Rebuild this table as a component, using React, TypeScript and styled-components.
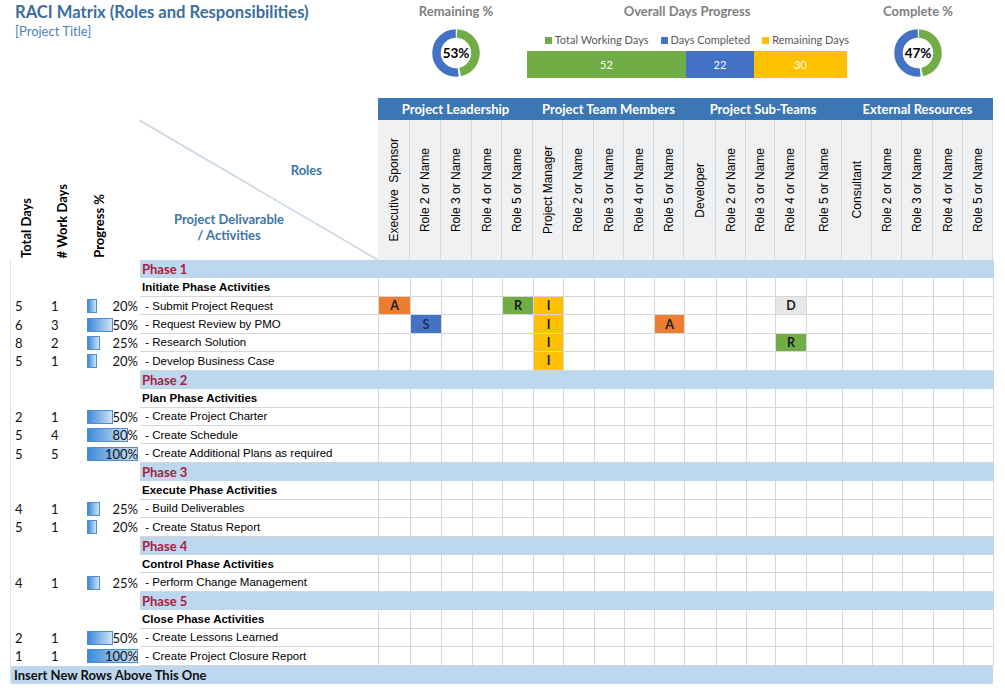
import styled, { createGlobalStyle } from 'styled-components';

const GlobalStyle = createGlobalStyle`
  body {
    margin: 0;
    background: #ffffff;
    font-family: Lato, "Open Sans", sans-serif;
  }
`;

const ROLE_WIDTHS = [32, 31, 31, 30, 31, 30, 31, 30, 30, 30, 32, 30, 29, 31, 36, 30, 30, 31, 30, 30];
const ROLE_COLS = ROLE_WIDTHS.map((w) => `${w}px`).join(' ');
const LEFT_COLS = '36px 36px 57px 239px';

const GROUPS = [
  { name: 'Project Leadership', span: 5 },
  { name: 'Project Team Members', span: 5 },
  { name: 'Project Sub-Teams', span: 5 },
  { name: 'External Resources', span: 5 },
];

const ROLES = [
  'Executive  Sponsor', 'Role 2 or Name', 'Role 3 or Name', 'Role 4 or Name', 'Role 5 or Name',
  'Project Manager', 'Role 2 or Name', 'Role 3 or Name', 'Role 4 or Name', 'Role 5 or Name',
  'Developer', 'Role 2 or Name', 'Role 3 or Name', 'Role 4 or Name', 'Role 5 or Name',
  'Consultant', 'Role 2 or Name', 'Role 3 or Name', 'Role 4 or Name', 'Role 5 or Name',
];

type Mark = 'A' | 'R' | 'I' | 'S' | 'D';

type Row =
  | { kind: 'phase'; label: string }
  | { kind: 'section'; label: string }
  | { kind: 'task'; total: number; work: number; pct: number; label: string; marks?: Record<number, Mark> };

const ROWS: Row[] = [
  { kind: 'phase', label: 'Phase 1' },
  { kind: 'section', label: 'Initiate Phase Activities' },
  { kind: 'task', total: 5, work: 1, pct: 20, label: 'Submit Project Request', marks: { 0: 'A', 4: 'R', 5: 'I', 13: 'D' } },
  { kind: 'task', total: 6, work: 3, pct: 50, label: 'Request Review by PMO', marks: { 1: 'S', 5: 'I', 9: 'A' } },
  { kind: 'task', total: 8, work: 2, pct: 25, label: 'Research Solution', marks: { 5: 'I', 13: 'R' } },
  { kind: 'task', total: 5, work: 1, pct: 20, label: 'Develop Business Case', marks: { 5: 'I' } },
  { kind: 'phase', label: 'Phase 2' },
  { kind: 'section', label: 'Plan Phase Activities' },
  { kind: 'task', total: 2, work: 1, pct: 50, label: 'Create Project Charter' },
  { kind: 'task', total: 5, work: 4, pct: 80, label: 'Create Schedule' },
  { kind: 'task', total: 5, work: 5, pct: 100, label: 'Create Additional Plans as required' },
  { kind: 'phase', label: 'Phase 3' },
  { kind: 'section', label: 'Execute Phase Activities' },
  { kind: 'task', total: 4, work: 1, pct: 25, label: 'Build Deliverables' },
  { kind: 'task', total: 5, work: 1, pct: 20, label: 'Create Status Report' },
  { kind: 'phase', label: 'Phase 4' },
  { kind: 'section', label: 'Control Phase Activities' },
  { kind: 'task', total: 4, work: 1, pct: 25, label: 'Perform Change Management' },
  { kind: 'phase', label: 'Phase 5' },
  { kind: 'section', label: 'Close Phase Activities' },
  { kind: 'task', total: 2, work: 1, pct: 50, label: 'Create Lessons Learned' },
  { kind: 'task', total: 1, work: 1, pct: 100, label: 'Create Project Closure Report' },
];

const MARK_COLORS: Record<Mark, { bg: string; fg: string }> = {
  A: { bg: '#ed7d31', fg: '#1a1a1a' },
  R: { bg: '#70ad47', fg: '#1a1a1a' },
  I: { bg: '#ffc000', fg: '#1a1a1a' },
  S: { bg: '#4472c4', fg: '#1f2f52' },
  D: { bg: '#e7e6e6', fg: '#1a1a1a' },
};

function Donut({ value }: { value: number }) {
  const r = 19.5;
  const c = 2 * Math.PI * r;
  const gap = 2;
  const green = c * (1 - value / 100);
  const blue = c * (value / 100);
  return (
    <svg width="50" height="50" viewBox="0 0 50 50">
      <g transform="rotate(-90 25 25)" fill="none" strokeWidth="8.5">
        <circle cx="25" cy="25" r={r} stroke="#70ad47" strokeDasharray={`${green - gap} ${c}`} strokeDashoffset={-gap / 2} />
        <circle cx="25" cy="25" r={r} stroke="#4472c4" strokeDasharray={`${blue - gap} ${c}`} strokeDashoffset={-(green + gap / 2)} />
      </g>
    </svg>
  );
}

export default function App() {
  return (
    <Page>
      <GlobalStyle />
      <Header>
        <TitleBlock>
          <Title>RACI Matrix (Roles and Responsibilities)</Title>
          <Subtitle>[Project Title]</Subtitle>
        </TitleBlock>
        <Kpi>
          <KpiTitle>Remaining %</KpiTitle>
          <DonutWrap>
            <Donut value={53} />
            <DonutLabel>53%</DonutLabel>
          </DonutWrap>
        </Kpi>
        <Progress>
          <KpiTitle>Overall Days Progress</KpiTitle>
          <Legend>
            <LegendItem $color="#70ad47">Total Working Days</LegendItem>
            <LegendItem $color="#4472c4">Days Completed</LegendItem>
            <LegendItem $color="#ffc000">Remaining Days</LegendItem>
          </Legend>
          <Bar>
            <Segment $color="#70ad47" $w={159}>52</Segment>
            <Segment $color="#4472c4" $w={68}>22</Segment>
            <Segment $color="#ffc000" $w={93}>30</Segment>
          </Bar>
        </Progress>
        <Kpi>
          <KpiTitle>Complete %</KpiTitle>
          <DonutWrap>
            <Donut value={53} />
            <DonutLabel>47%</DonutLabel>
          </DonutWrap>
        </Kpi>
      </Header>

      <Table>
        <TableHead>
          <LeftHead>
            <SideLabel $pad={8}><span>Total Days</span></SideLabel>
            <SideLabel $pad={8}><span># Work Days</span></SideLabel>
            <SideLabel $pad={9}><span>Progress %</span></SideLabel>
            <Deliverable>
              <Diagonal width="239" height="162" viewBox="0 0 239 162">
                <line x1="0" y1="22" x2="239" y2="162" stroke="#c9d6e4" strokeWidth="1.6" />
              </Diagonal>
              <RolesText>Roles</RolesText>
              <DeliverableText>Project Delivarable<br />/ Activities</DeliverableText>
            </Deliverable>
          </LeftHead>
          <RoleHead>
            <GroupBar>
              {GROUPS.map((g) => (
                <Group key={g.name} $span={g.span}>{g.name}</Group>
              ))}
            </GroupBar>
            <RoleLabels>
              {ROLES.map((r, i) => (
                <RoleLabel key={i}><span>{r}</span></RoleLabel>
              ))}
            </RoleLabels>
          </RoleHead>
        </TableHead>

        <Body>
          {ROWS.map((row, i) => {
            if (row.kind === 'phase') {
              return (
                <GridRow key={i}>
                  <Gutter />
                  <PhaseBand>{row.label}</PhaseBand>
                </GridRow>
              );
            }
            if (row.kind === 'section') {
              return (
                <GridRow key={i}>
                  <Gutter />
                  <Activity $bold>{row.label}</Activity>
                  {ROLE_WIDTHS.map((_, c) => <RoleCell key={c} />)}
                </GridRow>
              );
            }
            return (
              <GridRow key={i}>
                <Num>{row.total}</Num>
                <Num>{row.work}</Num>
                <ProgressCell>
                  <ProgressBar style={{ width: `${(row.pct / 100) * 51}px` }} />
                  <Pct>{row.pct}%</Pct>
                </ProgressCell>
                <Activity> - {row.label}</Activity>
                {ROLE_WIDTHS.map((_, c) => {
                  const m = row.marks?.[c];
                  return (
                    <RoleCell key={c} $mark={m}>
                      {m}
                    </RoleCell>
                  );
                })}
              </GridRow>
            );
          })}
          <Footer>Insert New Rows Above This One</Footer>
        </Body>
      </Table>
    </Page>
  );
}

const Page = styled.div`
  width: 1005px;
  height: 693px;
  overflow: hidden;
`;

const Header = styled.div`
  display: flex;
  gap: 30px;
  padding-left: 15px;
  height: 98px;
`;

const TitleBlock = styled.div`
  width: 370px;
  padding-top: 2px;
`;

const Title = styled.h1`
  margin: 0;
  font-size: 16.6px;
  line-height: 20px;
  font-weight: 700;
  color: #3b6e9f;
`;

const Subtitle = styled.div`
  margin-top: 1px;
  font-size: 13px;
  line-height: 16px;
  color: #4f81bd;
`;

const Kpi = styled.div`
  width: 82px;
  display: flex;
  flex-direction: column;
  align-items: center;
`;

const KpiTitle = styled.div`
  margin-top: 3px;
  font-size: 13px;
  line-height: 16px;
  font-weight: 700;
  color: #7f7f7f;
  white-space: nowrap;
`;

const DonutWrap = styled.div`
  margin-top: 9px;
  display: grid;
  place-items: center;
  & > * {
    grid-area: 1 / 1;
  }
`;

const DonutLabel = styled.div`
  font-size: 13.5px;
  font-weight: 700;
  color: #000;
`;

const Progress = styled.div`
  width: 320px;
  display: flex;
  flex-direction: column;
  align-items: center;
`;

const Legend = styled.div`
  display: flex;
  gap: 12px;
  margin-top: 14px;
  align-self: flex-end;
  margin-right: -2px;
  font-size: 11px;
  line-height: 14px;
  color: #595959;
`;

const LegendItem = styled.span<{ $color: string }>`
  display: flex;
  align-items: center;
  gap: 3px;
  &::before {
    content: '';
    width: 7px;
    height: 7px;
    background: ${(p) => p.$color};
  }
`;

const Bar = styled.div`
  display: flex;
  margin-top: 4px;
  height: 27px;
  width: 320px;
`;

const Segment = styled.div<{ $color: string; $w: number }>`
  width: ${(p) => p.$w}px;
  background: ${(p) => p.$color};
  color: #ffffff;
  font-size: 11px;
  display: flex;
  align-items: center;
  justify-content: center;
`;

const Table = styled.div`
  margin-left: 10px;
  width: 983px;
`;

const TableHead = styled.div`
  display: flex;
  height: 162px;
`;

const LeftHead = styled.div`
  display: grid;
  grid-template-columns: ${LEFT_COLS};
`;

const SideLabel = styled.div<{ $pad: number }>`
  display: flex;
  align-items: flex-end;
  padding-left: ${(p) => p.$pad}px;
  padding-bottom: 2px;
  span {
    writing-mode: vertical-rl;
    transform: rotate(180deg);
    font-size: 13px;
    font-weight: 700;
    color: #000;
    white-space: nowrap;
  }
`;

const Deliverable = styled.div`
  position: relative;
  display: flex;
  flex-direction: column;
`;

const Diagonal = styled.svg`
  position: absolute;
  left: 0;
  top: 0;
`;

const RolesText = styled.div`
  margin-top: 64px;
  align-self: flex-end;
  margin-right: 56px;
  font-size: 13px;
  font-weight: 700;
  color: #3e74aa;
`;

const DeliverableText = styled.div`
  margin-top: 33px;
  width: 112px;
  margin-left: 34px;
  text-align: center;
  font-size: 13px;
  line-height: 16px;
  font-weight: 700;
  color: #3e74aa;
`;

const RoleHead = styled.div`
  display: flex;
  flex-direction: column;
`;

const GroupBar = styled.div`
  display: grid;
  grid-template-columns: ${ROLE_COLS};
  height: 22px;
  background: #3a77b4;
`;

const Group = styled.div<{ $span: number }>`
  grid-column: span ${(p) => p.$span};
  display: flex;
  align-items: center;
  justify-content: center;
  color: #ffffff;
  font-size: 13px;
  font-weight: 700;
  white-space: nowrap;
`;

const RoleLabels = styled.div`
  display: grid;
  grid-template-columns: ${ROLE_COLS};
  height: 140px;
  background: #f0f1f2;
`;

const RoleLabel = styled.div`
  display: flex;
  align-items: center;
  justify-content: center;
  border-right: 1px solid #d3dae2;
  span {
    writing-mode: vertical-rl;
    transform: rotate(180deg);
    font-family: "Liberation Sans", Arial, sans-serif;
    font-size: 12px;
    color: #000;
    white-space: pre;
  }
`;

const Body = styled.div`
  border-left: 1px solid #dde3ea;
`;

const GridRow = styled.div`
  display: grid;
  grid-template-columns: ${LEFT_COLS} ${ROLE_COLS};
  height: 18.45px;
`;

const Gutter = styled.div`
  grid-column: 1 / 4;
`;

const PhaseBand = styled.div`
  grid-column: 4 / -1;
  background: #bdd7ee;
  color: #a6213c;
  font-size: 13px;
  font-weight: 700;
  padding-left: 2px;
  display: flex;
  align-items: center;
`;

const Num = styled.div`
  padding-left: 4px;
  font-size: 13px;
  color: #111;
  display: flex;
  align-items: center;
`;

const ProgressCell = styled.div`
  display: grid;
  align-items: center;
  padding: 0 2px 0 4px;
  & > * {
    grid-area: 1 / 1;
  }
`;

const ProgressBar = styled.div`
  height: 14px;
  box-sizing: border-box;
  border: 1px solid #4a8fd6;
  background: linear-gradient(to right, #3f8ad8, #cfe3f7);
`;

const Pct = styled.div`
  justify-self: end;
  font-size: 13px;
  color: #111;
`;

const Activity = styled.div<{ $bold?: boolean }>`
  box-sizing: border-box;
  border-right: 1px solid #d6d6d6;
  border-bottom: 1px solid #d6d6d6;
  padding-left: 2px;
  display: flex;
  align-items: center;
  font-family: "Liberation Sans", Arial, sans-serif;
  font-size: 11.5px;
  font-weight: ${(p) => (p.$bold ? 700 : 400)};
  color: #000;
  white-space: pre;
`;

const RoleCell = styled.div<{ $mark?: Mark }>`
  box-sizing: border-box;
  border-right: 1px solid #d6d6d6;
  border-bottom: 1px solid #d6d6d6;
  background: ${(p) => (p.$mark ? MARK_COLORS[p.$mark].bg : '#ffffff')};
  color: ${(p) => (p.$mark ? MARK_COLORS[p.$mark].fg : '#000')};
  display: flex;
  align-items: center;
  justify-content: center;
  font-size: 12.5px;
  font-weight: 700;
`;

const Footer = styled.div`
  height: 18.45px;
  background: #bdd7ee;
  display: flex;
  align-items: center;
  padding-left: 3px;
  font-size: 13px;
  font-weight: 700;
  color: #111;
`;
